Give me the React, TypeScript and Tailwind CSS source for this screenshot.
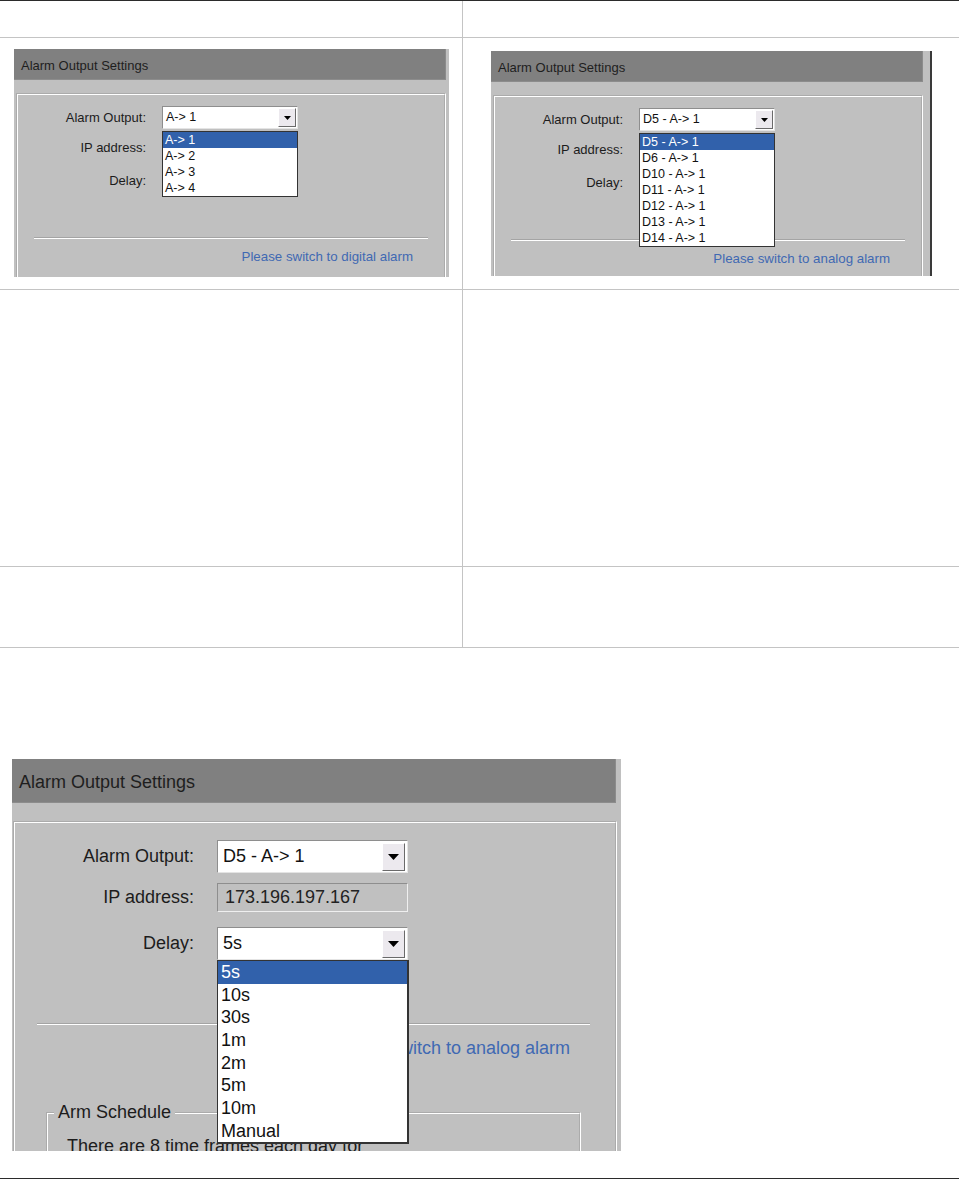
import React from 'react';

const digitalOptions = ['A-> 1', 'A-> 2', 'A-> 3', 'A-> 4'];
const analogOptions = ['D5 - A-> 1', 'D6 - A-> 1', 'D10 - A-> 1', 'D11 - A-> 1', 'D12 - A-> 1', 'D13 - A-> 1', 'D14 - A-> 1'];
const delayOptions = ['5s', '10s', '30s', '1m', '2m', '5m', '10m', 'Manual'];

const Arrow = ({ w, h }: { w: number; h: number }) => (
    <svg width={w} height={h} viewBox={`0 0 ${w} ${h}`}>
        <path d={`M0 0H${w}L${w / 2} ${h}Z`} fill="#000" />
    </svg>
);

const SmallSelect = ({ value }: { value: string }) => (
    <div className="w-[136px] h-[23px] bg-white border border-[#8e8e8e] border-r-[#e4e4e4] border-b-[#e4e4e4] flex items-center">
        <span className="flex-1 pl-[3px] text-[12.5px] text-[#111] whitespace-nowrap">{value}</span>
        <div className="w-[18px] h-[19px] mr-[1px] bg-[#ece9ee] border border-white border-r-[#6a6a6a] border-b-[#6a6a6a] flex items-center justify-center">
            <Arrow w={7} h={4} />
        </div>
    </div>
);

const SmallPanel = ({ options, link, className }: { options: string[]; link: string; className: string }) => (
    <div className={`overflow-hidden bg-[#c0c0c0] ${className}`}>
        <div className="h-[31px] w-[432px] bg-[#808080] border-r border-b border-[#8c8c8c] flex items-center pl-[7px] pt-[4px] text-[13px] text-[#1e1e1e]">
            Alarm Output Settings
        </div>
        <div className="h-[13px]" />
        <div className="ml-[2px] w-[430px] h-[200px] border-2 border-white [border-style:groove]">
            <div className="mt-[11px] flex items-center">
                <span className="w-[128px] text-right text-[13px] text-[#1c1c1c]">Alarm Output:</span>
                <div className="relative ml-[16px]">
                    <SmallSelect value={options[0]} />
                    <ul className="absolute left-0 top-[25px] z-10 w-[136px] bg-white border border-[#333]">
                        {options.map((o, i) => (
                            <li
                                key={o}
                                className={`h-[16px] pl-[2px] text-[12.5px] leading-[16px] whitespace-nowrap ${i === 0 ? 'bg-[#3161ab] text-white' : 'text-[#111]'}`}
                            >
                                {o}
                            </li>
                        ))}
                    </ul>
                </div>
            </div>
            <div className="mt-[8px] flex items-center">
                <span className="w-[128px] text-right text-[13px] text-[#1c1c1c]">IP address:</span>
                <div className="ml-[16px] w-[136px] h-[21px] border border-[#8e8e8e] border-r-[#efefef] border-b-[#efefef]" />
            </div>
            <div className="mt-[11px] flex items-center">
                <span className="w-[128px] text-right text-[13px] text-[#1c1c1c]">Delay:</span>
                {/* covered by the open list */}
                <div className="ml-[16px]">
                    <SmallSelect value="" />
                </div>
            </div>
            <div className="mt-[45px] ml-[16px] w-[394px] border-t border-b border-t-[#a4a4a4] border-b-white" />
            <div className="mt-[8px] mr-[31px] text-right text-[13.3px] text-[#3f69b3]">{link}</div>
        </div>
    </div>
);

const BigSelect = ({ value }: { value: string }) => (
    <div className="w-[191px] h-[33px] bg-white border border-[#8e8e8e] border-r-[#e4e4e4] border-b-[#e4e4e4] flex items-center">
        <span className="flex-1 pl-[5px] text-[18px] text-[#111] whitespace-nowrap">{value}</span>
        <div className="w-[23px] h-[28px] mr-[2px] bg-[#ece9ee] border border-white border-r-[#6a6a6a] border-b-[#6a6a6a] flex items-center justify-center">
            <Arrow w={11} h={6} />
        </div>
    </div>
);

const BigPanel = () => (
    <div className="ml-[12px] w-[609px] h-[392px] overflow-hidden bg-[#c0c0c0]">
        <div className="h-[44px] w-[604px] bg-[#808080] border-r border-b border-[#8c8c8c] flex items-center pl-[7px] pt-[3px] text-[18px] text-[#1e1e1e]">
            Alarm Output Settings
        </div>
        <div className="h-[18px]" />
        <div className="ml-[1px] w-[604px] h-[360px] border-2 border-white [border-style:groove]">
            <div className="mt-[17px] flex items-center">
                <span className="w-[179px] text-right text-[18px] text-[#1c1c1c]">Alarm Output:</span>
                <div className="ml-[23px]">
                    <BigSelect value="D5 - A-> 1" />
                </div>
            </div>
            <div className="mt-[10px] flex items-center">
                <span className="w-[179px] text-right text-[18px] text-[#1c1c1c]">IP address:</span>
                <div className="ml-[23px] w-[191px] h-[29px] flex items-center pl-[7px] border border-[#8e8e8e] border-r-[#efefef] border-b-[#efefef] text-[18px] text-[#222]">
                    173.196.197.167
                </div>
            </div>
            <div className="mt-[15px] flex items-center">
                <span className="w-[179px] text-right text-[18px] text-[#1c1c1c]">Delay:</span>
                <div className="relative ml-[23px]">
                    <BigSelect value="5s" />
                    <ul className="absolute left-0 top-full z-10 w-[192px] bg-white border border-[#333] border-r-2 border-b-2">
                        {delayOptions.map((o, i) => (
                            <li
                                key={o}
                                className={`h-[22.67px] pl-[3px] text-[18px] leading-[22.67px] ${i === 0 ? 'bg-[#3161ab] text-white' : 'text-[#111]'}`}
                            >
                                {o}
                            </li>
                        ))}
                    </ul>
                </div>
            </div>
            <div className="mt-[63px] ml-[22px] w-[553px] border-t border-b border-t-[#a4a4a4] border-b-white" />
            <div className="mt-[13px] mr-[45px] text-right text-[18px] leading-[21px] text-[#3f69b3]">
                Please switch to analog alarm
            </div>
            <fieldset className="mt-[43px] ml-[31px] w-[535px] h-[120px] pl-[6px] border-2 border-white [border-style:groove]">
                <legend className="px-[4px] text-[18px] leading-[21px] text-[#1c1c1c]">Arm Schedule</legend>
                <p className="mt-[13px] ml-[13px] text-[18px] leading-[21px] text-[#1c1c1c] whitespace-nowrap">
                    There are 8 time frames each day for
                </p>
            </fieldset>
        </div>
    </div>
);

const App = () => {
    return (
        <div className="w-[959px] h-[1180px] bg-white font-['Liberation_Sans',Arial,sans-serif] overflow-hidden">
            <div className="h-px bg-[#2b2b2b]" />
            <div className="grid grid-cols-[463px_1fr]">
                {/* header row */}
                <div className="h-[37px] border-r border-b border-[#c4c4c4]" />
                <div className="h-[37px] border-b border-[#c4c4c4]" />

                {/* screenshots row */}
                <div className="h-[252px] pl-[14px] pt-[11px] border-r border-b border-[#c4c4c4]">
                    <SmallPanel options={digitalOptions} link="Please switch to digital alarm" className="w-[435px] h-[228px]" />
                </div>
                <div className="h-[252px] pl-[28px] pt-[13px] border-b border-[#c4c4c4]">
                    <SmallPanel
                        options={analogOptions}
                        link="Please switch to analog alarm"
                        className="w-[441px] h-[225px] border-r-2 border-[#3a3a3a]"
                    />
                </div>

                <div className="h-[277px] border-r border-b border-[#c4c4c4]" />
                <div className="h-[277px] border-b border-[#c4c4c4]" />

                <div className="h-[81px] border-r border-b border-[#c4c4c4]" />
                <div className="h-[81px] border-b border-[#c4c4c4]" />
            </div>

            <div className="h-[111px]" />
            <BigPanel />
            <div className="h-[27px]" />
            <div className="h-px bg-[#2b2b2b]" />
        </div>
    );
};

export default App;
